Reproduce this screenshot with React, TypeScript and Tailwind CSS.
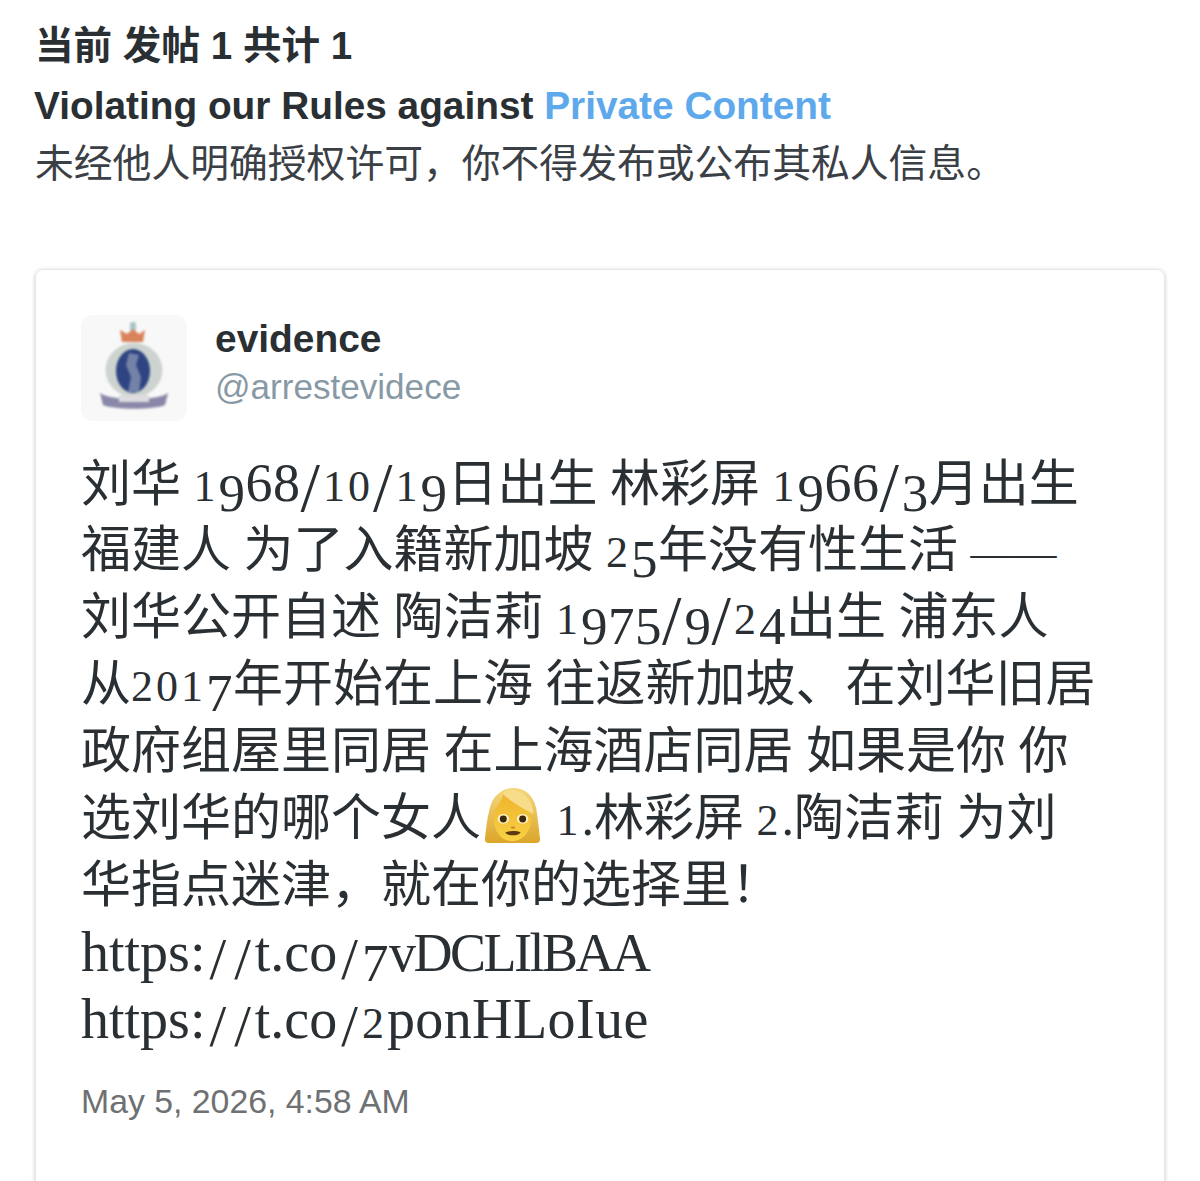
const CJK = "font-['Liberation_Sans','Noto_Sans_CJK_SC',sans-serif]";

const tweetLines = [
  "刘华 1968/10/19日出生 林彩屏 1966/3月出生",
  "福建人 为了入籍新加坡 25年没有性生活 ——",
  "刘华公开自述 陶洁莉 1975/9/24出生 浦东人",
  "从2017年开始在上海 往返新加坡、在刘华旧居",
  "政府组屋里同居 在上海酒店同居 如果是你 你",
  "EMOJI",
  "华指点迷津，就在你的选择里！",
  "https://t.co/7vDCLIlBAA",
  "https://t.co/2ponHLoIue",
];

// the reference's serif has old-style figures and is wider than Liberation Serif,
// so figures, slashes and the url pieces each get their own size
function Runs({ text }: { text: string }) {
  const isUrl = text.startsWith("https");
  const parts = text.split(/(https:|t\.co|vDCLIlBAA|ponHLoIue|——|\/|[0-9])/).filter(Boolean);
  return (
    <>
      {parts.map((part, i) => {
        if (part === "/" && isUrl) return <span key={i} className="text-[60px] ml-[4px] tracking-[4px] align-[-8px]">/</span>;
        if (part === "/") return <span key={i} className="text-[70px] tracking-[3px] align-[-10px]">/</span>;
        if (part === "——") return <span key={i} className="text-[43px]">——</span>;
        if (part === "https:" || part === "t.co") return <span key={i} className="text-[56px]">{part}</span>;
        if (part === "vDCLIlBAA") return <span key={i} className="text-[54px] tracking-[-2.5px]">{part}</span>;
        if (part === "ponHLoIue") return <span key={i} className="text-[56px] tracking-[0.4px]">{part}</span>;
        if (/[012]/.test(part)) return <span key={i} className="text-[44px] tracking-[3px]">{part}</span>;
        if (/[34579]/.test(part)) return <span key={i} className="text-[53px] tracking-[0.5px] align-[-10px]">{part}</span>;
        if (/[68]/.test(part)) return <span key={i} className="text-[54px] tracking-[0.5px]">{part}</span>;
        return <span key={i}>{part}</span>;
      })}
    </>
  );
}

function WomanEmoji() {
  return (
    <svg viewBox="0 0 60 60" className="inline-block w-[58px] h-[58px] ml-[2px] mr-[3px] align-[-10px]">
      <defs>
        <linearGradient id="hair" x1="0" y1="0" x2="0" y2="1">
          <stop offset="0" stopColor="#f5d77e" />
          <stop offset="1" stopColor="#dba62a" />
        </linearGradient>
        <linearGradient id="face" x1="0" y1="0" x2="0" y2="1">
          <stop offset="0" stopColor="#eeb52c" />
          <stop offset="1" stopColor="#f9d045" />
        </linearGradient>
      </defs>
      <path d="M2 54 C3 44 4 34 7 22 C10 9 20 1 31 1 C43 1 52 8 55 22 C57 34 58 44 59 54 C59 56 58 58 55 58 L6 58 C3 58 2 56 2 54 Z" fill="url(#hair)" />
      <path d="M11 32 C11 46 19 56 30 56 C41 56 50 46 50 32 C50 24 47 20 44 19 C34 17 24 12 21 8 C18 18 11 22 11 32 Z" fill="url(#face)" />
      <path d="M21 6 C26 14 38 20 52 28 C53 20 47 6 32 3 C27 2 23 4 21 6 Z" fill="#f7dc8a" />
      <ellipse cx="21" cy="33" rx="6" ry="5" fill="#fff0bf" />
      <circle cx="21" cy="33" r="3.6" fill="#3d2a0e" />
      <ellipse cx="41" cy="33" rx="6" ry="5" fill="#fff0bf" />
      <circle cx="41" cy="33" r="3.6" fill="#3d2a0e" />
      <ellipse cx="31" cy="42" rx="2.5" ry="1.2" fill="#c98a1e" />
      <path d="M23 47 C27 45 35 45 39 47 C36 51 26 51 23 47 Z" fill="#5b3a0e" />
    </svg>
  );
}

function Badge() {
  return (
    <div className="w-[106px] h-[106px] rounded-xl bg-[#f8f8f8]">
      <svg viewBox="0 0 106 106" className="w-[106px] h-[106px] blur-[1px]">
        <rect x="49" y="7" width="6" height="9" rx="2.5" fill="#a9c4c6" />
        <path d="M39 15 L46 19 L52 14 L58 19 L64 15 L62 27 L41 27 Z" fill="#d9835c" />
        <ellipse cx="53" cy="55" rx="28.5" ry="27" fill="#cdd3ce" />
        <ellipse cx="52" cy="56" rx="17" ry="22" fill="#2f4583" />
        <path d="M48 38 L58 40 L55 50 L60 62 L58 77 L47 77 L50 62 L45 50 Z" fill="#7482a8" />
        <path d="M19 78 C30 86 76 86 87 78 L84 90 C72 95 34 95 22 90 Z" fill="#8a88a8" />
        <rect x="38" y="80" width="30" height="7" fill="#dcdce0" />
      </svg>
    </div>
  );
}

export default function App() {
  return (
    <div className={`h-[1181px] overflow-hidden bg-white px-[35px] pt-[23px] ${CJK}`}>
      <h1 className="text-[38.6px] leading-[46px] font-bold text-[#292f33]">当前 发帖 1 共计 1</h1>
      <h2 className="mt-[14px] text-[38.8px] leading-[46px] font-bold text-[#292f33] -ml-[1px]">
        Violating our Rules against <span className="text-[#5ea9ec]">Private Content</span>
      </h2>
      <p className="mt-[12px] text-[38.8px] leading-[46px] text-[#3a4045]">未经他人明确授权许可，你不得发布或公布其私人信息。</p>

      <div className="mt-[82px] h-[1000px] rounded-lg border border-[#e8e8e8] shadow-[0_1px_4px_rgba(0,0,0,0.2)] px-[45px] pt-[45px]">
        <div className="flex items-center gap-[28px]">
          <Badge />
          <div className="pb-[10px]">
            <div className="text-[38.9px] leading-[46px] font-bold text-[#292f33]">evidence</div>
            <div className="mt-[2px] text-[35.1px] leading-[46px] text-[#8899a6]">@arrestevidece</div>
          </div>
        </div>
        <div className="mt-[29px] font-['Liberation_Serif','Noto_Sans_CJK_SC',serif] text-[50px] leading-[67px] text-[#292f33]">
          {tweetLines.map((line) =>
            line === "EMOJI" ? (
              <div key={line} className="h-[67px] whitespace-nowrap">
                选刘华的哪个女人<WomanEmoji /> <Runs text="1.林彩屏 2.陶洁莉 为刘" />
              </div>
            ) : (
              <div key={line} className="h-[67px] whitespace-nowrap"><Runs text={line} /></div>
            ),
          )}
        </div>
        <div className="mt-[25px] text-[33.8px] leading-[46px] text-[#6e7072]">May 5, 2026, 4:58 AM</div>
      </div>
    </div>
  );
}
